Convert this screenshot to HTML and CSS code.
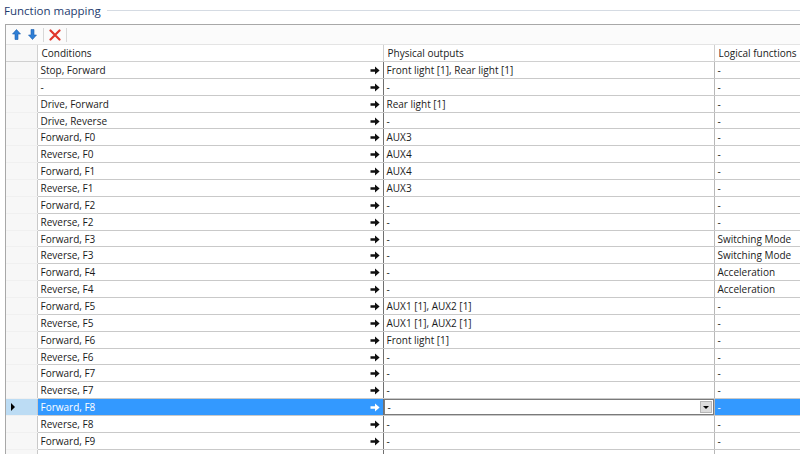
FILE: index.html
```html
<!DOCTYPE html>
<html>
<head>
<meta charset="utf-8">
<link rel="stylesheet" href="styles.css">
</head>
<body>
<div class="group-title"><span class="title">Function mapping</span><span class="title-line"></span></div>
<div class="frame">
  <div class="toolbar">
    <span class="tb-btn"><svg width="9" height="11" viewBox="0 0 9 11"><path d="M4.5 0.5 L8.5 5 L6 5 L6 10.5 L3 10.5 L3 5 L0.5 5 Z" fill="#2f7fd6" stroke="#1d5fae" stroke-width="0.6"/></svg></span>
    <span class="tb-btn"><svg width="9" height="11" viewBox="0 0 9 11"><path d="M4.5 10.5 L8.5 6 L6 6 L6 0.5 L3 0.5 L3 6 L0.5 6 Z" fill="#2f7fd6" stroke="#1d5fae" stroke-width="0.6"/></svg></span>
    <span class="tb-sep"></span>
    <span class="tb-btn"><svg width="12" height="12" viewBox="0 0 12 12"><path d="M1.5 1.5 L10.5 10.5 M10.5 1.5 L1.5 10.5" stroke="#e0352b" stroke-width="2.2" stroke-linecap="round"/></svg></span>
    <span class="tb-sep"></span>
  </div>
  <table class="grid">
    <colgroup><col class="c-rh"><col class="c-cond"><col class="c-phys"><col class="c-log"></colgroup>
    <thead>
      <tr><th class="rh"></th><th>Conditions</th><th>Physical outputs</th><th>Logical functions</th></tr>
    </thead>
    <tbody id="rows"></tbody>
  </table>
</div>
<script src="app.js"></script>
</body>
</html>
```
FILE: app.js
```js
var data = [
  ["Stop, Forward","Front light [1], Rear light [1]","-"],
  ["-","-","-"],
  ["Drive, Forward","Rear light [1]","-"],
  ["Drive, Reverse","-","-"],
  ["Forward, F0","AUX3","-"],
  ["Reverse, F0","AUX4","-"],
  ["Forward, F1","AUX4","-"],
  ["Reverse, F1","AUX3","-"],
  ["Forward, F2","-","-"],
  ["Reverse, F2","-","-"],
  ["Forward, F3","-","Switching Mode"],
  ["Reverse, F3","-","Switching Mode"],
  ["Forward, F4","-","Acceleration"],
  ["Reverse, F4","-","Acceleration"],
  ["Forward, F5","AUX1 [1], AUX2 [1]","-"],
  ["Reverse, F5","AUX1 [1], AUX2 [1]","-"],
  ["Forward, F6","Front light [1]","-"],
  ["Reverse, F6","-","-"],
  ["Forward, F7","-","-"],
  ["Reverse, F7","-","-"],
  ["Forward, F8","-","-"],
  ["Reverse, F8","-","-"],
  ["Forward, F9","-","-"],
  ["","",""]
];
var arrow = '<svg class="arr" width="10" height="9" viewBox="0 0 10 9"><path d="M0.5 3.2 H5 V0.6 L9.6 4.5 L5 8.4 V5.8 H0.5 Z"/></svg>';
var tb = document.getElementById("rows");
var html = "";
data.forEach(function (r, i) {
  var sel = i === 20;
  var last = i === data.length - 1;
  html += '<tr' + (sel ? ' class="sel"' : '') + '>' +
    '<td class="rh">' + (sel ? '<span class="cur"></span>' : '') + '</td>' +
    '<td class="cond"><span class="txt">' + r[0] + '</span>' + (last ? '' : arrow) + '</td>' +
    (sel
      ? '<td class="phys combo"><div class="cb"><span class="txt">' + r[1] + '</span><span class="dd"><span class="tri"></span></span></div></td>'
      : '<td class="phys">' + r[1] + '</td>') +
    '<td class="log">' + r[2] + '</td></tr>';
});
tb.innerHTML = html;
```
FILE: styles.css
```css
html, body {
  margin: 0;
  padding: 0;
  background: #ffffff;
  overflow: hidden;
}
body {
  font-family: "Segoe UI", "Open Sans", "Noto Sans", sans-serif;
  font-size: 10px;
  color: #1a1a1a;
  width: 800px;
  height: 454px;
}
.group-title {
  display: flex;
  align-items: center;
  height: 20px;
  padding-left: 4px;
}
.title {
  font-size: 11.5px;
  color: #1e3b6e;
  white-space: nowrap;
}
.title-line {
  flex: 1;
  height: 1px;
  background: #d5dbe3;
  margin-left: 6px;
  margin-top: 1px;
}
.frame {
  margin-left: 5px;
  margin-top: 4px;
  border-left: 1px solid #a8a8a8;
  border-top: 1px solid #a8a8a8;
}
.toolbar {
  display: flex;
  align-items: center;
  height: 19px;
  padding-left: 2px;
  background: #fbfbfb;
  border-bottom: 1px solid #e4e4e4;
}
.tb-btn {
  width: 16px;
  height: 16px;
  display: flex;
  align-items: center;
  justify-content: center;
}
.tb-sep {
  width: 1px;
  height: 14px;
  background: #d8d8d8;
  margin: 0 3px;
}
.grid {
  border-collapse: collapse;
  table-layout: fixed;
  width: 800px;
}
.c-rh { width: 31px; }
.c-cond { width: 346px; }
.c-phys { width: 331px; }
.c-log { width: 92px; }
th {
  height: 16px;
  padding: 0 0 0 4px;
  font-weight: normal;
  text-align: left;
  background: #ffffff;
  border-bottom: 1px solid #d0d0d0;
  border-right: 1px solid #d0d0d0;
  white-space: nowrap;
  overflow: hidden;
}
th.rh { background: #f7f7f7; }
td {
  height: 15.86px;
  padding: 0 0 0 3px;
  border-bottom: 1px solid #c9c9c9;
  border-right: 1px solid #b8b8b8;
  white-space: nowrap;
  overflow: hidden;
}
td.rh {
  background: #f7f7f7;
  border-bottom: 1px solid #f0f0f0;
  border-right: 1px solid #c9c9c9;
  padding: 0;
}
td.cond {
  position: relative;
  border-right: 1px solid #707070;
}
.arr {
  position: absolute;
  right: 3px;
  top: 4px;
  fill: #111111;
}
td.log { border-right: none; }
tr.sel td.cond, tr.sel td.log {
  background: #3399ff;
  color: #ffffff;
}
tr.sel .arr { fill: #ffffff; }
tr.sel td.rh {
  background: #bcdcf4;
  position: relative;
}
.cur {
  position: absolute;
  left: 5px;
  top: 4px;
  width: 0;
  height: 0;
  border-top: 4px solid transparent;
  border-bottom: 4px solid transparent;
  border-left: 4px solid #000000;
}
td.combo {
  padding: 0;
}
.cb {
  display: flex;
  align-items: center;
  height: 14px;
  border: 1px solid #7a7a7a;
  background: #ffffff;
  padding-left: 3px;
}
.cb .txt { flex: 1; }
.dd {
  width: 12px;
  height: 12px;
  margin-right: 1px;
  background: #dcdcdc;
  border: 1px solid #b5b5b5;
  box-sizing: border-box;
  display: flex;
  align-items: center;
  justify-content: center;
}
.tri {
  width: 0;
  height: 0;
  border-left: 3px solid transparent;
  border-right: 3px solid transparent;
  border-top: 3px solid #000000;
}
```
